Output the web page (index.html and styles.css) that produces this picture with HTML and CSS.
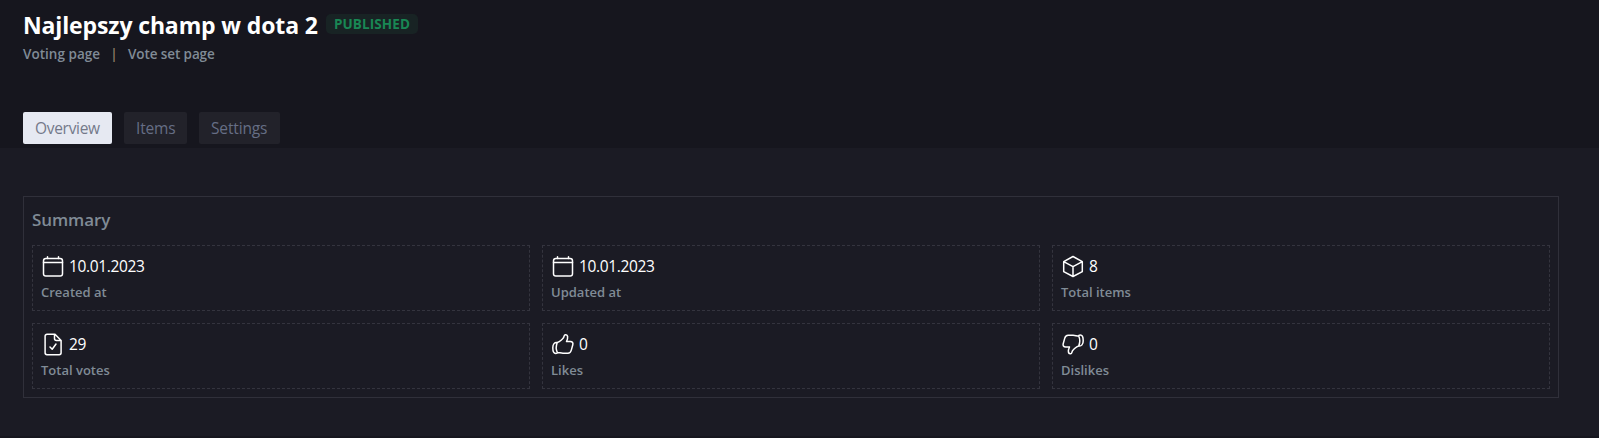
FILE: index.html
```html
<!DOCTYPE html>
<html lang="en">
<head>
<meta charset="utf-8">
<title>Najlepszy champ w dota 2</title>
<link rel="stylesheet" href="styles.css">
</head>
<body>
<svg class="sprite" aria-hidden="true">
  <symbol id="calendar" viewBox="0 0 24 24"><rect x="2.500" y="3.500" width="19" height="17.500" rx="2.300"/><path d="M2.500 7.500h19M6.500 3.500V1.800M17.500 3.500V1.800"/></symbol>
  <symbol id="cube" viewBox="0 0 24 24"><path d="M12 1.500l9.300 5.200v10L12 21.500l-9.300-4.800v-10zM2.700 6.700L12 11.700l9.300-5M12 11.700V21.500"/></symbol>
  <symbol id="file" viewBox="0 0 24 24"><path d="M14 1.300H6A1.900 1.900 0 0 0 4.100 3.200v16.600A1.900 1.900 0 0 0 6 21.700h12.200a1.900 1.900 0 0 0 1.900-1.900V7.500zM13.500 1.500v4a2 2 0 0 0 2 2h4.500M9 14l2.200 2.200 3.800-5.200"/></symbol>
  <symbol id="thumb" viewBox="0 0 24 24"><path d="M6.300 9.500c2.300-.5 3.600-2.100 4.900-3.200 1.400-1.200 1.800-2 2-3.400.3-1.800 3-1.500 3.400.6.300 1.800-.3 3.300-1.100 5h3.800c2.200 0 3 1.500 2.500 3.300l-1.500 5.300c-.6 2.300-1.500 3.100-3.400 3.100H12c-2.300 0-3.500-.7-5.800-.8M6.300 9.500C3.500 9 1.800 11.200 1.800 14.800s.9 5.600 2.900 5.600c1.300 0 1.900-.4 1.500-1.200-1.100-2.400-1.300-6.200.1-9.700z"/></symbol>
</svg>
<header class="header">
  <div class="title-row">
    <h1 class="title">Najlepszy champ w dota 2</h1>
    <span class="badge">PUBLISHED</span>
  </div>
  <div class="links"><a class="link-voting">Voting page</a><span class="divider">|</span><a class="link-set">Vote set page</a></div>
  <nav class="tabs">
    <a class="tab tab-overview active">Overview</a>
    <a class="tab tab-items">Items</a>
    <a class="tab tab-settings">Settings</a>
  </nav>
</header>
<main class="content">
  <section class="panel">
    <h2 class="panel-title">Summary</h2>
    <div class="grid">
      <div class="cell"><div class="value"><svg class="icon"><use href="#calendar"/></svg><span>10.01.2023</span></div><div class="label">Created at</div></div>
      <div class="cell"><div class="value"><svg class="icon"><use href="#calendar"/></svg><span>10.01.2023</span></div><div class="label">Updated at</div></div>
      <div class="cell"><div class="value"><svg class="icon"><use href="#cube"/></svg><span>8</span></div><div class="label">Total items</div></div>
      <div class="cell"><div class="value"><svg class="icon"><use href="#file"/></svg><span>29</span></div><div class="label">Total votes</div></div>
      <div class="cell"><div class="value"><svg class="icon"><use href="#thumb"/></svg><span>0</span></div><div class="label">Likes</div></div>
      <div class="cell"><div class="value"><svg class="icon flipped"><use href="#thumb"/></svg><span>0</span></div><div class="label">Dislikes</div></div>
    </div>
  </section>
</main>
</body>
</html>
```
FILE: styles.css
```css
* { box-sizing: border-box; }
body { margin: 0; height: 438px; overflow: hidden; background: #16161e; color: #fff; font-family: "Open Sans", "Noto Sans", sans-serif; }
.sprite { display: none; }
.header { height: 148px; padding: 11px 23px 0; display: flex; flex-direction: column; }
.title-row { display: flex; gap: 8px; height: 30px; }
.title { margin: 0; width: 295px; font-size: 23px; line-height: 28px; font-weight: 700; letter-spacing: -0.13px; white-space: nowrap; }
.badge { width: 92px; height: 20px; margin-top: 3px; border-radius: 5px; background: #182324; color: #198754; font-size: 13.500px; line-height: 20px; font-weight: 700; letter-spacing: 0.1px; text-align: center; }
.links { display: flex; height: 28px; color: #808b96; font-size: 13.500px; font-weight: 600; line-height: 27px; letter-spacing: 0.03px; white-space: nowrap; }
.link-voting { width: 77px; }
.divider { width: 28px; text-align: center; color: #948269; }
.link-set { letter-spacing: -0.1px; }
.tabs { display: flex; gap: 12px; margin-top: 43px; }
.tab { height: 32px; border-radius: 2px; background: #22222a; color: #666e85; font-size: 15.500px; line-height: 32px; letter-spacing: -0.150px; padding-left: 12px; white-space: nowrap; }
.tab.active { background: #e6e9f2; color: #74798a; }
.tab-overview { width: 89px; letter-spacing: -0.3px; }
.tab-items { width: 63px; }
.tab-settings { width: 81px; }
.content { height: 288px; padding: 48px 40px 0 23px; background: #1b1b24; }
.panel { height: 202px; padding: 8px; border: 1px solid #30303a; }
.panel-title { margin: 0; height: 40px; color: #808b96; font-size: 17px; line-height: 29px; font-weight: 600; letter-spacing: -0.1px; }
.grid { display: grid; grid-template-columns: repeat(3, 1fr); gap: 12px; }
.cell { height: 66px; padding: 8px; border: 1px dashed #34343e; }
.value { display: flex; align-items: center; gap: 4px; height: 26px; font-size: 15.500px; letter-spacing: -0.35px; }
.value span { line-height: 24px; height: 26px; }
.icon { width: 24px; height: 24px; fill: none; stroke: #fff; stroke-width: 1.5; stroke-linejoin: round; stroke-linecap: round; }
.flipped { transform: translateY(-1.5px) rotate(180deg); }
.label { color: #808b96; font-size: 13px; line-height: 24px; font-weight: 600; }
```
